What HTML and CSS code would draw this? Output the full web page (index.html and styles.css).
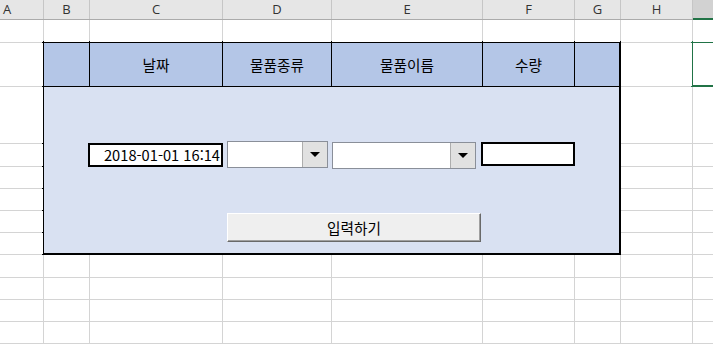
FILE: index.html
```html
<!DOCTYPE html>
<html lang="ko">
<head>
    <meta charset="UTF-8">
    <meta name="viewport" content="width=device-width, initial-scale=1.0">
    <title>물품 입력</title>
    <link rel="stylesheet" href="styles.css">
</head>
<body>

<div class="col-heads">
    <div class="col-head col-a">A</div>
    <div class="col-head col-b">B</div>
    <div class="col-head col-c">C</div>
    <div class="col-head col-d">D</div>
    <div class="col-head col-e">E</div>
    <div class="col-head col-f">F</div>
    <div class="col-head col-g">G</div>
    <div class="col-head col-h">H</div>
    <div class="col-head col-i"></div>
</div>

<div class="sheet" id="sheet">
    <div class="input-form">
        <div class="form-head">
            <div class="fh-cell w-b"></div>
            <div class="fh-cell w-c">날짜</div>
            <div class="fh-cell w-d">물품종류</div>
            <div class="fh-cell w-e">물품이름</div>
            <div class="fh-cell w-f">수량</div>
            <div class="fh-cell w-g"></div>
        </div>
        <div class="form-body">
            <div class="form-row">
                <div class="textbox date-box">2018-01-01 16:14</div>
                <div class="combo combo-kind">
                    <span class="combo-btn"><svg width="10" height="5" viewBox="0 0 10 5"><path d="M0 0h10L5 5z"/></svg></span>
                </div>
                <div class="combo combo-name">
                    <span class="combo-btn"><svg width="10" height="5" viewBox="0 0 10 5"><path d="M0 0h10L5 5z"/></svg></span>
                </div>
                <div class="textbox qty-box"></div>
            </div>
            <button class="submit-btn">입력하기</button>
        </div>
    </div>
    <div class="selected-cell"></div>
</div>

<script>
    // 나머지 빈 셀 채우기 (양식과 선택 셀을 뺀 칸)
    const sheet = document.getElementById("sheet");
    for (let i = 0; i < 65; i++) {
        const cell = document.createElement("div");
        cell.className = "cell";
        sheet.appendChild(cell);
    }
</script>

</body>
</html>
```
FILE: styles.css
```css
* {
    box-sizing: border-box;
}
html, body {
    margin: 0;
    padding: 0;
}
body {
    width: 713px;
    height: 344px;
    overflow: hidden;
    background: #ffffff;
    font-family: "Noto Sans CJK KR", sans-serif;
    font-size: 14.67px;
    color: #000;
}

/* 열 머리글 */
.col-heads {
    display: flex;
    height: 20px;
    background: #e6e6e6;
    border-bottom: 1px solid #ababab;
}
.col-head {
    flex: none;
    height: 19px;
    line-height: 19px;
    border-right: 1px solid #c6c6c6;
    font-family: "Open Sans", sans-serif;
    font-size: 13px;
    color: #333;
    text-align: center;
}
.col-a { width: 44px; text-align: left; padding-left: 3px; }
.col-b { width: 46px; }
.col-c { width: 133px; }
.col-d { width: 109px; }
.col-e { width: 151px; }
.col-f { width: 92px; }
.col-g { width: 46px; }
.col-h { width: 72px; }
.col-i {
    flex: 1;
    height: 20px;
    border-right: none;
    background: #d2d2d2;
    border-bottom: 2px solid #217346;
}

/* 시트 격자 */
.sheet {
    display: grid;
    grid-template-columns: 43px 45px 132px 108px 150px 91px 45px 71px 1fr;
    grid-template-rows: 22px 43px 56px 22px 21px 21px 21px 21px 22px 21px 21px 21px;
    gap: 1px;
    padding-bottom: 1px;
    background: #d4d4d4;
}
.cell {
    background: #ffffff;
}
.selected-cell {
    grid-column: 9;
    grid-row: 2;
    margin: -2px -4px -1px -2px;
    border: 2px solid #217346;
    background: #ffffff;
}

/* 입력 양식 */
.input-form {
    grid-column: 2 / 8;
    grid-row: 2 / 9;
    margin: -2px -1px -1px -2px;
    border: 2px solid #000;
    background: #d9e1f2;
    display: flex;
    flex-direction: column;
}
.form-head {
    display: flex;
    height: 44px;
    background: #b4c6e7;
    border-bottom: 1px solid #000;
}
.fh-cell {
    flex: none;
    display: flex;
    align-items: center;
    justify-content: center;
    border-right: 1px solid #000;
}
.w-b { width: 46px; }
.w-c { width: 133px; }
.w-d { width: 109px; }
.w-e { width: 151px; }
.w-f { width: 92px; }
.w-g { flex: 1; border-right: none; }

.form-body {
    flex: 1;
    display: flex;
    flex-direction: column;
    align-items: flex-start;
    padding: 54px 0 0 44px;
}
.form-row {
    display: flex;
    align-items: flex-start;
    height: 27px;
}
.textbox {
    background: #ffffff;
    border: 2px solid #000;
}
.date-box {
    width: 135px;
    height: 24px;
    margin-top: 2px;
    padding-right: 1px;
    text-align: right;
    line-height: 20px;
}
.qty-box {
    width: 94px;
    height: 24px;
    margin: 1px 0 0 5px;
}
.combo {
    display: flex;
    justify-content: flex-end;
    height: 27px;
    background: #ffffff;
    border: 1px solid #8a8f99;
}
.combo-kind {
    width: 101px;
    margin-left: 4px;
}
.combo-name {
    width: 144px;
    margin: 1px 0 0 4px;
}
.combo-btn {
    width: 25px;
    display: flex;
    align-items: center;
    justify-content: center;
    background: #e1e1e1;
    border-left: 1px solid #adadad;
}

.submit-btn {
    width: 254px;
    height: 29px;
    margin: 45px 0 0 139px;
    padding: 0;
    background: #efefef;
    border: 1px solid;
    border-color: #ffffff #696969 #696969 #ffffff;
    box-shadow: inset -1px -1px #a0a0a0;
    font-family: "Noto Sans CJK KR", sans-serif;
    font-size: 14.67px;
    color: #000;
}
```
